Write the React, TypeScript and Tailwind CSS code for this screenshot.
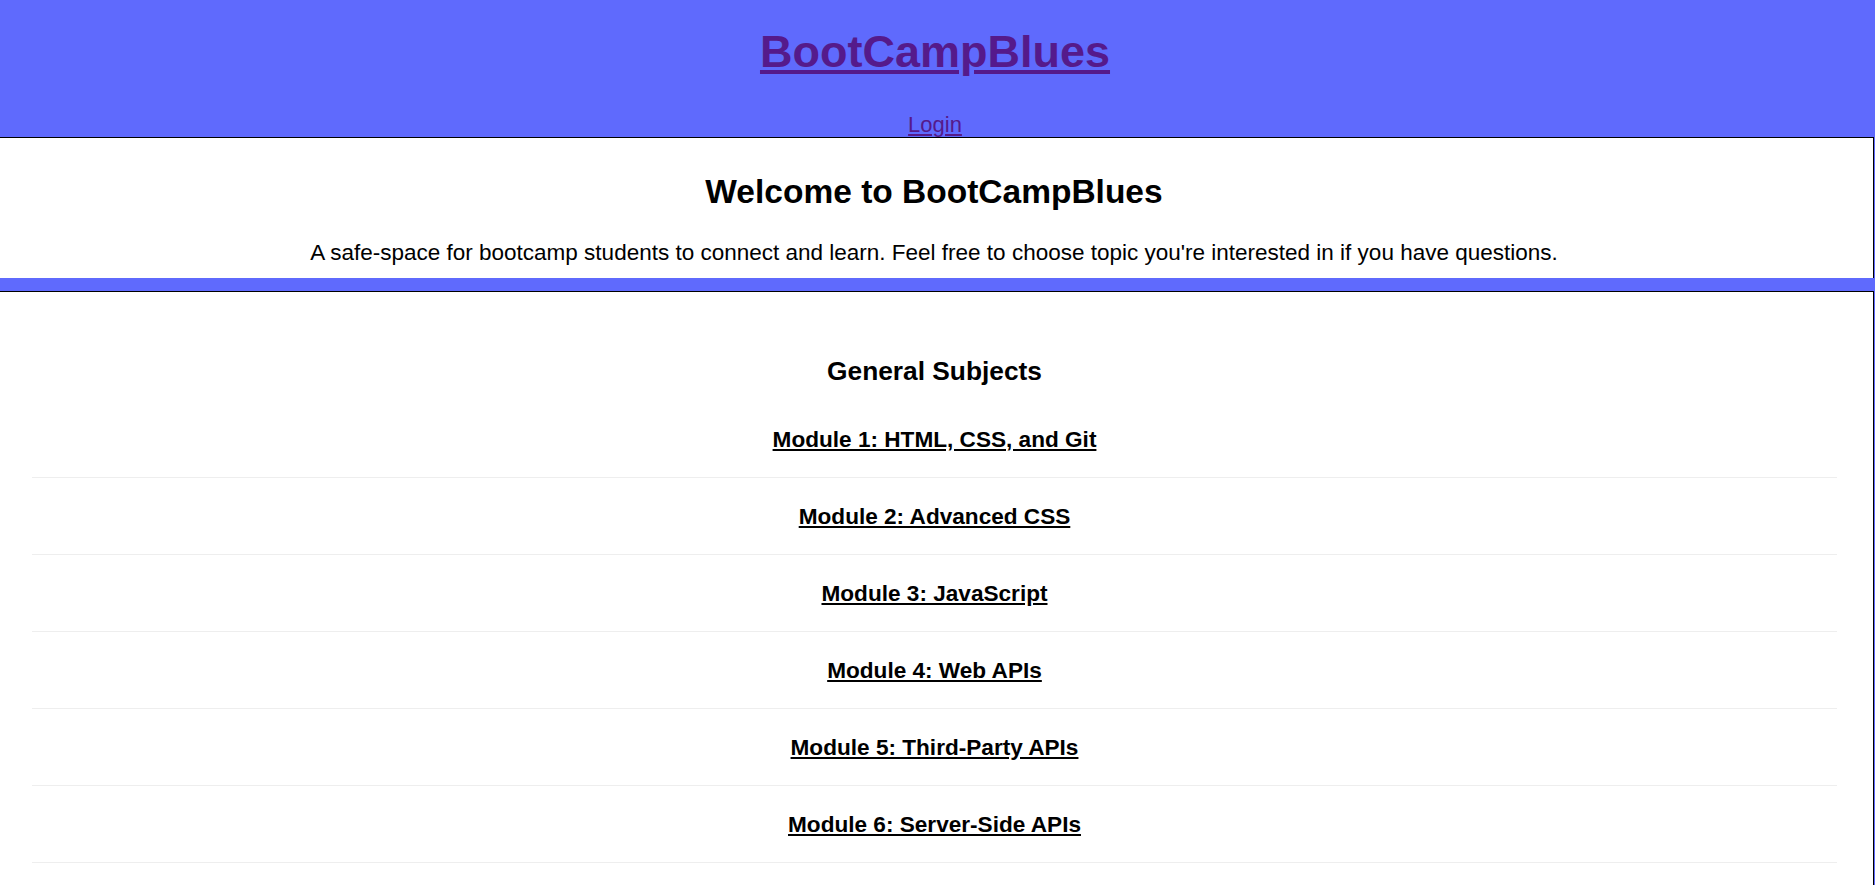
const modules = [
  "Module 1: HTML, CSS, and Git",
  "Module 2: Advanced CSS",
  "Module 3: JavaScript",
  "Module 4: Web APIs",
  "Module 5: Third-Party APIs",
  "Module 6: Server-Side APIs",
  "Module 7: Project 1",
  "Module 8: Node.js",
];

const App = () => {
  return (
    <div
      className="min-h-screen bg-[#5f6afd] text-black"
      style={{ fontFamily: '"Liberation Sans", Arial, sans-serif' }}
    >
      {/* Header */}
      <header className="flex flex-col items-center pt-[26px] pr-[5px]">
        <a href="#" className="text-[45px] leading-[51px] font-bold text-[#551a8b] underline">
          BootCampBlues
        </a>
        <a href="#" className="mt-[35px] text-[22px] leading-[25px] text-[#551a8b] underline">
          Login
        </a>
      </header>

      {/* Welcome */}
      <section className="w-[1874px] bg-white border-t border-r border-black pt-[34px] pb-[13px] pr-[5px] text-center">
        <h1 className="text-[33.5px] leading-[39px] font-bold">Welcome to BootCampBlues</h1>
        <p className="mt-[29px] text-[22.5px] leading-[25px]">
          A safe-space for bootcamp students to connect and learn. Feel free to choose topic you're interested in
          if you have questions.
        </p>
      </section>

      {/* Subjects */}
      <section className="w-[1874px] min-h-[600px] bg-white border-t border-r border-black mt-[13px] pt-[64px] pl-[32px] pr-[36px]">
        <h2 className="text-center text-[26.3px] leading-[30px] font-bold">General Subjects</h2>
        <ul className="mt-[15px]">
          {modules.map((m) => (
            <li key={m} className="h-[77px] flex items-center justify-center border-b border-[#eeeeee]">
              <a href="#" className="text-[22.6px] leading-[25px] font-bold underline text-black">
                {m}
              </a>
            </li>
          ))}
        </ul>
      </section>
    </div>
  );
};

export default App;
